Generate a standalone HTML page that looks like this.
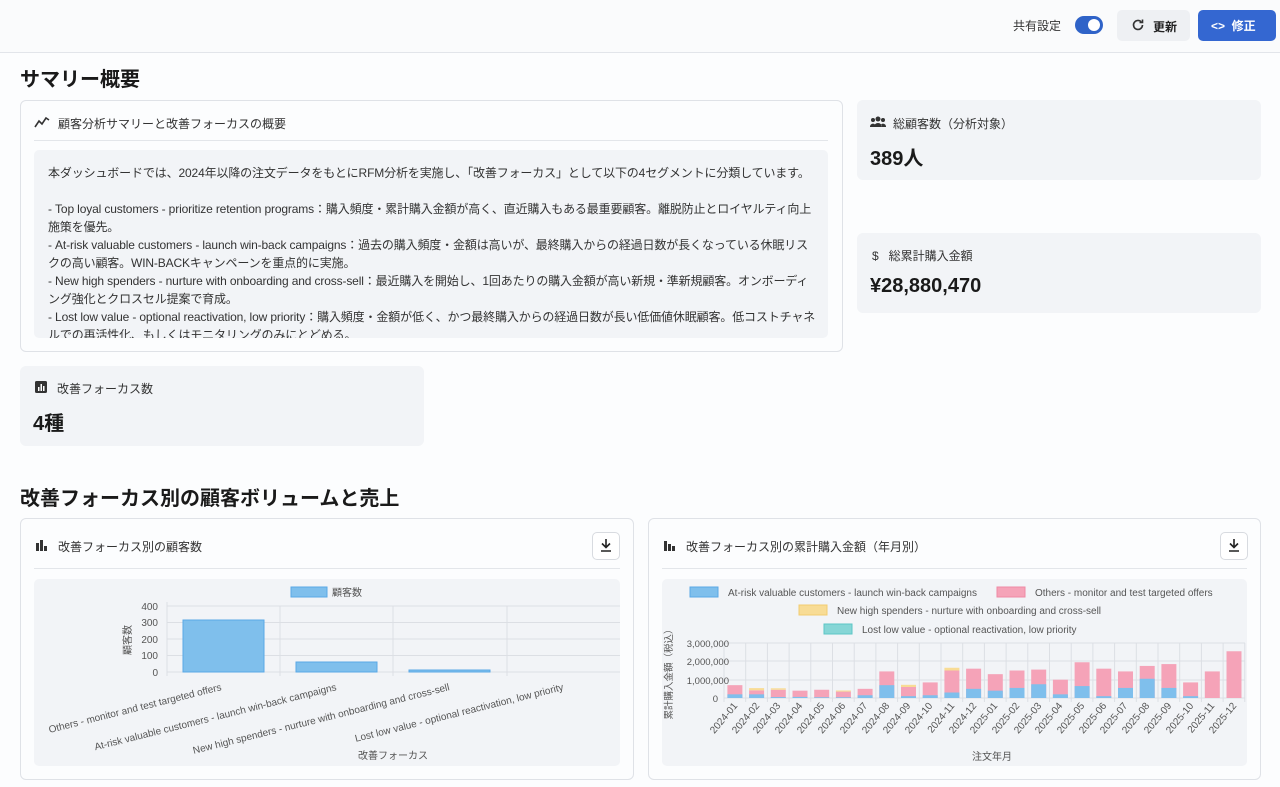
<!DOCTYPE html>
<html><head><meta charset="utf-8"><style>
*{box-sizing:border-box;margin:0;padding:0}
body{width:1280px;height:787px;overflow:hidden;background:#fcfdfe;font-family:"Liberation Sans","Noto Sans CJK JP",sans-serif;color:#222;position:relative}
.hdr{position:absolute;left:0;top:0;width:1280px;height:53px;background:#fafbfc;border-bottom:1px solid #e2e5ea}
.abs{position:absolute}
.card{position:absolute;border:1px solid #dfe2e7;border-radius:6px;background:#fcfdfe}
.stat{position:absolute;background:#f2f4f7;border-radius:6px}
.h1{position:absolute;font-size:20px;font-weight:bold;color:#1a1a1a}
.ct{position:absolute;font-size:12px;color:#333}
.big{position:absolute;font-size:20px;font-weight:bold;color:#1a1a1a}
.dl{position:absolute;width:28px;height:28px;border:1px solid #d8dbe0;border-radius:5px;background:#fff}
</style></head><body>
<div class="hdr"></div>
<div class="ct" style="left:1013px;top:17px;font-size:12px">共有設定</div>
<div class="abs" style="left:1075px;top:16px;width:28px;height:18px;border-radius:9px;background:#2f63c8"><div style="position:absolute;left:13px;top:3px;width:12px;height:12px;border-radius:6px;background:#fff"></div></div>
<div class="abs" style="left:1117px;top:10px;width:73px;height:31px;border-radius:5px;background:#eef0f3"></div>
<svg class="abs" style="left:1131px;top:18px" width="14" height="14" viewBox="0 0 14 14"><path d="M11.5 7a4.5 4.5 0 1 1-1.3-3.2" fill="none" stroke="#333" stroke-width="1.6"/><path d="M11.5 1.5v3h-3" fill="none" stroke="#333" stroke-width="1.6"/></svg>
<div class="ct" style="left:1153px;top:18px;font-weight:bold;color:#222">更新</div>
<div class="abs" style="left:1198px;top:10px;width:78px;height:31px;border-radius:5px;background:#3467d1"></div>
<div class="ct" style="left:1211px;top:17px;color:#fff;font-weight:bold">&lt;&gt;&nbsp; 修正</div>

<div class="h1" style="left:20px;top:63px">サマリー概要</div>
<div class="card" style="left:20px;top:100px;width:823px;height:252px"></div>
<svg class="abs" style="left:34px;top:115px" width="16" height="14" viewBox="0 0 16 14"><path d="M1 12l4-6 3 3 4-6 3 2" fill="none" stroke="#333" stroke-width="1.6"/></svg>
<div class="ct" style="left:58px;top:115px">顧客分析サマリーと改善フォーカスの概要</div>
<div class="abs" style="left:34px;top:140px;width:794px;height:1px;background:#e3e6ea"></div>
<div class="abs" style="left:34px;top:150px;width:794px;height:188px;background:#f2f4f7;border-radius:5px;overflow:hidden;padding:14px 12px 14px 14px;font-size:12px;line-height:18px;color:#333;letter-spacing:-0.14px">
本ダッシュボードでは、2024年以降の注文データをもとにRFM分析を実施し、「改善フォーカス」として以下の4セグメントに分類しています。<br><br>
- Top loyal customers - prioritize retention programs：購入頻度・累計購入金額が高く、直近購入もある最重要顧客。離脱防止とロイヤルティ向上施策を優先。<br>
- At-risk valuable customers - launch win-back campaigns：過去の購入頻度・金額は高いが、最終購入からの経過日数が長くなっている休眠リスクの高い顧客。WIN-BACKキャンペーンを重点的に実施。<br>
- New high spenders - nurture with onboarding and cross-sell：最近購入を開始し、1回あたりの購入金額が高い新規・準新規顧客。オンボーディング強化とクロスセル提案で育成。<br>
- Lost low value - optional reactivation, low priority：購入頻度・金額が低く、かつ最終購入からの経過日数が長い低価値休眠顧客。低コストチャネルでの再活性化、もしくはモニタリングのみにとどめる。
</div>

<div class="stat" style="left:857px;top:100px;width:404px;height:80px"></div>
<svg class="abs" style="left:870px;top:116px" width="16" height="12" viewBox="0 0 16 12"><circle cx="8" cy="3" r="2.5" fill="#333"/><circle cx="3" cy="4" r="2" fill="#333"/><circle cx="13" cy="4" r="2" fill="#333"/><path d="M4 11a4 4 0 0 1 8 0zM0 11a3 3 0 0 1 5-2.5L4 11zM16 11a3 3 0 0 0-5-2.5L12 11z" fill="#333"/></svg>
<div class="ct" style="left:893px;top:115px">総顧客数（分析対象）</div>
<div class="big" style="left:870px;top:142px">389人</div>
<div class="stat" style="left:857px;top:233px;width:404px;height:80px"></div>
<div class="ct" style="left:872px;top:247px">$&nbsp;&nbsp; 総累計購入金額</div>
<div class="big" style="left:870px;top:275px">¥28,880,470</div>
<div class="stat" style="left:20px;top:366px;width:404px;height:80px"></div>
<svg class="abs" style="left:35px;top:381px" width="12" height="12" viewBox="0 0 12 12"><rect width="12" height="12" rx="1.5" fill="#333"/><rect x="3" y="6" width="1.5" height="4" fill="#fff"/><rect x="5.5" y="3" width="1.5" height="7" fill="#fff"/><rect x="8" y="5" width="1.5" height="5" fill="#fff"/></svg>
<div class="ct" style="left:57px;top:380px">改善フォーカス数</div>
<div class="big" style="left:33px;top:407px">4種</div>

<div class="h1" style="left:20px;top:482px">改善フォーカス別の顧客ボリュームと売上</div>
<div class="card" style="left:20px;top:518px;width:614px;height:262px"></div>
<div class="card" style="left:648px;top:518px;width:613px;height:262px"></div>
<div class="ct" style="left:58px;top:538px">改善フォーカス別の顧客数</div>
<div class="ct" style="left:686px;top:538px">改善フォーカス別の累計購入金額（年月別）</div>
<div class="dl" style="left:592px;top:532px"></div>
<div class="dl" style="left:1220px;top:532px"></div>
<div class="abs" style="left:34px;top:568px;width:586px;height:1px;background:#e3e6ea"></div>
<div class="abs" style="left:662px;top:568px;width:585px;height:1px;background:#e3e6ea"></div>
<div class="abs" style="left:34px;top:579px;width:586px;height:187px;background:#f2f4f7;border-radius:5px"></div>
<div class="abs" style="left:662px;top:579px;width:585px;height:187px;background:#f2f4f7;border-radius:5px"></div>

<svg class="abs" style="left:0;top:0" width="1280" height="787" font-family="Liberation Sans, Noto Sans CJK JP, sans-serif">
<g fill="#333"><rect x="36" y="543" width="3" height="8"/><rect x="40" y="540" width="3" height="11"/><rect x="44" y="546" width="3" height="5"/>
<rect x="664" y="541" width="3" height="10"/><rect x="668" y="544" width="3" height="7"/><rect x="672" y="546" width="3" height="5"/></g>
<g stroke="#222" stroke-width="1.6" fill="none"><path d="M606 539v8M602 543.5l4 4 4-4M601 551h10"/><path d="M1234 539v8M1230 543.5l4 4 4-4M1229 551h10"/></g>
<rect x="291" y="587" width="36" height="10" fill="#7fbfec" stroke="#5aa9e6"/>
<text x="332" y="596" font-size="10" fill="#555">顧客数</text>
<g stroke="#dcdfe4" stroke-width="1"><line x1="167" y1="606" x2="620" y2="606"/><line x1="167" y1="622.5" x2="620" y2="622.5"/><line x1="167" y1="639" x2="620" y2="639"/><line x1="167" y1="655.5" x2="620" y2="655.5"/><line x1="167" y1="672" x2="620" y2="672"/><line x1="167" y1="602" x2="167" y2="676"/><line x1="280" y1="606" x2="280" y2="676"/><line x1="393" y1="606" x2="393" y2="676"/><line x1="507" y1="606" x2="507" y2="676"/></g>
<g font-size="10" fill="#555" text-anchor="end"><text x="158" y="610">400</text><text x="158" y="626">300</text><text x="158" y="643">200</text><text x="158" y="659">100</text><text x="158" y="676">0</text></g>
<text transform="translate(131,640) rotate(-90)" font-size="10" fill="#555" text-anchor="middle">顧客数</text>
<g fill="#7fbfec" stroke="#5aa9e6"><rect x="183" y="620" width="81" height="52"/><rect x="296" y="662" width="81" height="10"/><rect x="409" y="670" width="81" height="2"/></g>
<g font-size="10" fill="#555" text-anchor="end">
<text transform="translate(222,690) rotate(-14)">Others - monitor and test targeted offers</text>
<text transform="translate(337,690) rotate(-14)">At-risk valuable customers - launch win-back campaigns</text>
<text transform="translate(450,690) rotate(-14)">New high spenders - nurture with onboarding and cross-sell</text>
<text transform="translate(564,690) rotate(-14)">Lost low value - optional reactivation, low priority</text>
</g>
<text x="393" y="759" font-size="10" fill="#555" text-anchor="middle">改善フォーカス</text>
<g font-size="10" fill="#555">
<rect x="690" y="587" width="28" height="10" fill="#7fbfec" stroke="#5aa9e6"/><text x="728" y="596">At-risk valuable customers - launch win-back campaigns</text>
<rect x="997" y="587" width="28" height="10" fill="#f5a3b8" stroke="#ef8aa5"/><text x="1035" y="596">Others - monitor and test targeted offers</text>
<rect x="799" y="605" width="28" height="10" fill="#f8dc95" stroke="#f2cc70"/><text x="837" y="614">New high spenders - nurture with onboarding and cross-sell</text>
<rect x="824" y="624" width="28" height="10" fill="#86d6d6" stroke="#5cc6c6"/><text x="862" y="633">Lost low value - optional reactivation, low priority</text>
</g>
<g stroke="#dcdfe4"><line x1="724" y1="643" x2="1245" y2="643"/><line x1="724" y1="661" x2="1245" y2="661"/><line x1="724" y1="680" x2="1245" y2="680"/><line x1="724" y1="698" x2="1245" y2="698"/>
<path d="M724 643v59M745.7 643v59M767.4 643v59M789.1 643v59M810.8 643v59M832.5 643v59M854.2 643v59M875.9 643v59M897.6 643v59M919.3 643v59M941 643v59M962.7 643v59M984.4 643v59M1006.1 643v59M1027.8 643v59M1049.5 643v59M1071.2 643v59M1092.9 643v59M1114.6 643v59M1136.3 643v59M1158 643v59M1179.7 643v59M1201.4 643v59M1223.1 643v59M1244.8 643v59"/></g>
<g font-size="9.5" fill="#555" text-anchor="end"><text x="729" y="647">3,000,000</text><text x="729" y="665">2,000,000</text><text x="729" y="684">1,000,000</text><text x="718" y="702">0</text></g>
<text transform="translate(672,672) rotate(-90)" font-size="9.5" fill="#555" text-anchor="middle">累計購入金額（税込）</text>
<g transform="translate(0,698) scale(1,-18.33)">
<g fill="#f5a3b8">
<rect x="727.4" y="0" width="15" height="0.7"/><rect x="749.1" y="0" width="15" height="0.42"/><rect x="770.8" y="0" width="15" height="0.45"/><rect x="792.5" y="0" width="15" height="0.4"/><rect x="814.2" y="0" width="15" height="0.45"/><rect x="835.9" y="0" width="15" height="0.35"/><rect x="857.6" y="0" width="15" height="0.5"/><rect x="879.3" y="0" width="15" height="1.45"/><rect x="901" y="0" width="15" height="0.6"/><rect x="922.7" y="0" width="15" height="0.85"/><rect x="944.4" y="0" width="15" height="1.5"/><rect x="966.1" y="0" width="15" height="1.6"/><rect x="987.8" y="0" width="15" height="1.3"/><rect x="1009.5" y="0" width="15" height="1.5"/><rect x="1031.2" y="0" width="15" height="1.55"/><rect x="1052.9" y="0" width="15" height="1.0"/><rect x="1074.6" y="0" width="15" height="1.95"/><rect x="1096.3" y="0" width="15" height="1.6"/><rect x="1118" y="0" width="15" height="1.45"/><rect x="1139.7" y="0" width="15" height="1.75"/><rect x="1161.4" y="0" width="15" height="1.85"/><rect x="1183.1" y="0" width="15" height="0.85"/><rect x="1204.8" y="0" width="15" height="1.45"/><rect x="1226.5" y="0" width="15" height="2.55"/>
</g>
<g fill="#f8dc95"><rect x="749.1" y="0.42" width="15" height="0.12"/><rect x="770.8" y="0.45" width="15" height="0.08"/><rect x="835.9" y="0.35" width="15" height="0.06"/><rect x="901" y="0.6" width="15" height="0.12"/><rect x="944.4" y="1.5" width="15" height="0.15"/></g>
<g fill="#7fbfec">
<rect x="727.4" y="0" width="15" height="0.2"/><rect x="749.1" y="0" width="15" height="0.2"/><rect x="770.8" y="0" width="15" height="0.05"/><rect x="792.5" y="0" width="15" height="0.06"/><rect x="814.2" y="0" width="15" height="0.04"/><rect x="835.9" y="0" width="15" height="0.04"/><rect x="857.6" y="0" width="15" height="0.15"/><rect x="879.3" y="0" width="15" height="0.7"/><rect x="901" y="0" width="15" height="0.1"/><rect x="922.7" y="0" width="15" height="0.15"/><rect x="944.4" y="0" width="15" height="0.3"/><rect x="966.1" y="0" width="15" height="0.5"/><rect x="987.8" y="0" width="15" height="0.4"/><rect x="1009.5" y="0" width="15" height="0.55"/><rect x="1031.2" y="0" width="15" height="0.75"/><rect x="1052.9" y="0" width="15" height="0.2"/><rect x="1074.6" y="0" width="15" height="0.65"/><rect x="1096.3" y="0" width="15" height="0.1"/><rect x="1118" y="0" width="15" height="0.55"/><rect x="1139.7" y="0" width="15" height="1.05"/><rect x="1161.4" y="0" width="15" height="0.55"/><rect x="1183.1" y="0" width="15" height="0.1"/>
</g></g>
<g font-size="10" fill="#555" text-anchor="end">
<text transform="translate(738,706) rotate(-50)">2024-01</text><text transform="translate(760,706) rotate(-50)">2024-02</text><text transform="translate(781,706) rotate(-50)">2024-03</text><text transform="translate(803,706) rotate(-50)">2024-04</text><text transform="translate(825,706) rotate(-50)">2024-05</text><text transform="translate(846,706) rotate(-50)">2024-06</text><text transform="translate(868,706) rotate(-50)">2024-07</text><text transform="translate(890,706) rotate(-50)">2024-08</text><text transform="translate(911,706) rotate(-50)">2024-09</text><text transform="translate(933,706) rotate(-50)">2024-10</text><text transform="translate(955,706) rotate(-50)">2024-11</text><text transform="translate(977,706) rotate(-50)">2024-12</text><text transform="translate(998,706) rotate(-50)">2025-01</text><text transform="translate(1020,706) rotate(-50)">2025-02</text><text transform="translate(1042,706) rotate(-50)">2025-03</text><text transform="translate(1063,706) rotate(-50)">2025-04</text><text transform="translate(1085,706) rotate(-50)">2025-05</text><text transform="translate(1107,706) rotate(-50)">2025-06</text><text transform="translate(1128,706) rotate(-50)">2025-07</text><text transform="translate(1150,706) rotate(-50)">2025-08</text><text transform="translate(1172,706) rotate(-50)">2025-09</text><text transform="translate(1194,706) rotate(-50)">2025-10</text><text transform="translate(1215,706) rotate(-50)">2025-11</text><text transform="translate(1237,706) rotate(-50)">2025-12</text>
</g>
<text x="992" y="760" font-size="10" fill="#555" text-anchor="middle">注文年月</text>
</svg>
</body></html>
